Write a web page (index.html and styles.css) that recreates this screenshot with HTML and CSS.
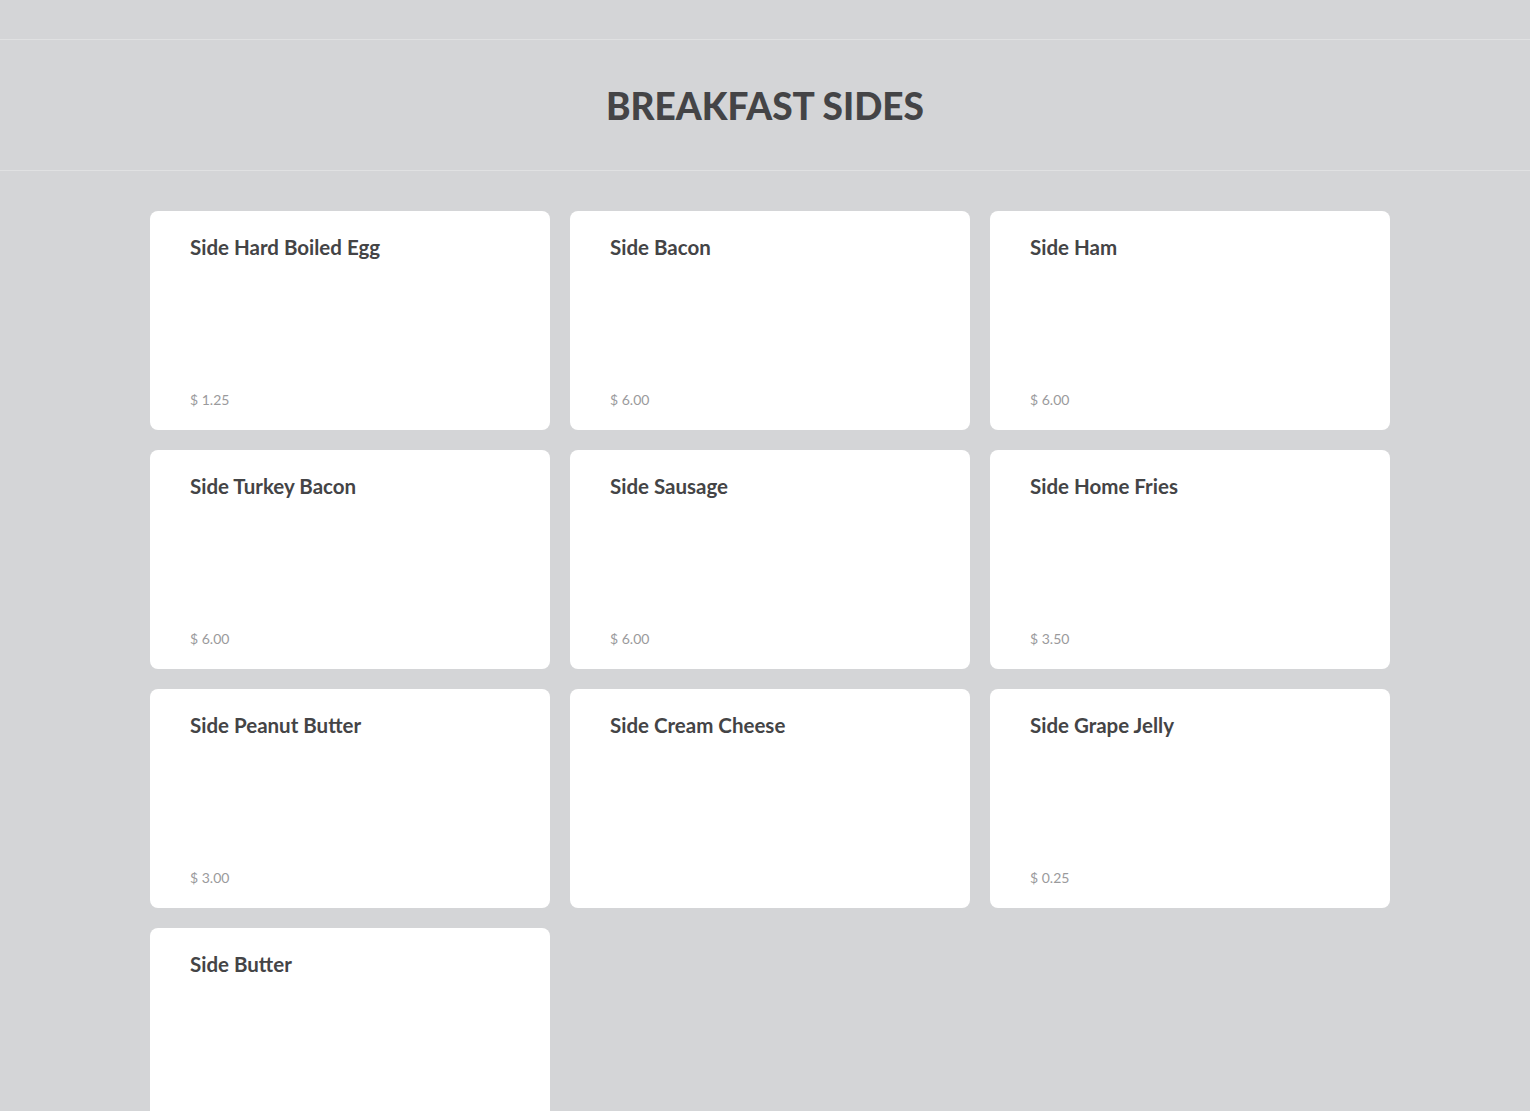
FILE: index.html
```html
<!DOCTYPE html>
<html lang="en">
<head>
<meta charset="utf-8">
<title>Breakfast Sides</title>
<link rel="stylesheet" href="styles.css">
</head>
<body>
<div class="topbar"></div>
<header class="section-head">
  <h1>BREAKFAST SIDES</h1>
</header>
<main class="grid">
  <div class="card"><h2>Side Hard Boiled Egg</h2><span class="price">$ 1.25</span></div>
  <div class="card"><h2>Side Bacon</h2><span class="price">$ 6.00</span></div>
  <div class="card"><h2>Side Ham</h2><span class="price">$ 6.00</span></div>
  <div class="card"><h2>Side Turkey Bacon</h2><span class="price">$ 6.00</span></div>
  <div class="card"><h2>Side Sausage</h2><span class="price">$ 6.00</span></div>
  <div class="card"><h2>Side Home Fries</h2><span class="price">$ 3.50</span></div>
  <div class="card"><h2>Side Peanut Butter</h2><span class="price">$ 3.00</span></div>
  <div class="card"><h2>Side Cream Cheese</h2><span class="price"></span></div>
  <div class="card"><h2>Side Grape Jelly</h2><span class="price">$ 0.25</span></div>
  <div class="card"><h2>Side Butter</h2><span class="price">$ 0.50</span></div>
</main>
</body>
</html>
```
FILE: styles.css
```css
html, body {
  margin: 0;
  padding: 0;
  background: #d4d5d7;
  font-family: "Lato", "Open Sans", sans-serif;
  color: #444446;
}
.topbar {
  height: 39px;
  border-bottom: 1px solid #e0e1e2;
}
.section-head {
  height: 130px;
  border-bottom: 1px solid #e0e1e2;
  display: flex;
  align-items: center;
  justify-content: center;
}
.section-head h1 {
  margin: 0;
  font-size: 37px;
  font-weight: 900;
  letter-spacing: 0;
  color: #444446;
}
.grid {
  width: 1240px;
  margin: 40px 0 0 150px;
  display: grid;
  grid-template-columns: repeat(3, 400px);
  gap: 20px;
}
.card {
  background: #fff;
  border-radius: 8px;
  height: 219px;
  box-sizing: border-box;
  padding: 23px 40px 20px;
  display: flex;
  flex-direction: column;
  justify-content: space-between;
}
.card h2 {
  margin: 0;
  font-size: 20.5px;
  line-height: 26px;
  font-weight: 700;
  color: #444446;
}
.price {
  font-size: 14px;
  line-height: 20px;
  color: #9a9a9c;
  min-height: 20px;
}
```
